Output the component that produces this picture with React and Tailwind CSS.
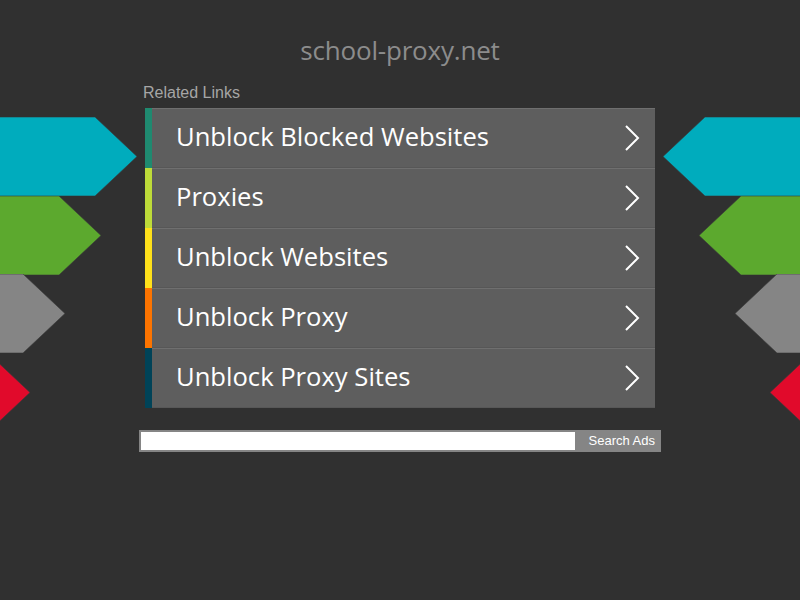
import React from 'react';

const links = [
  { label: 'Unblock Blocked Websites', bar: 'bg-[#1f8a70]' },
  { label: 'Proxies', bar: 'bg-[#bedb39]' },
  { label: 'Unblock Websites', bar: 'bg-[#ffe11a]' },
  { label: 'Unblock Proxy', bar: 'bg-[#fd7400]' },
  { label: 'Unblock Proxy Sites', bar: 'bg-[#004358]' },
];

// decorative arrow shapes on both edges of the page
const arrows = [
  { top: 117, rect: 95, fill: '#00acbd' },
  { top: 196, rect: 59, fill: '#5ca92e' },
  { top: 274, rect: 23, fill: '#858585' },
  { top: 353, rect: -12, fill: '#e10a2b' },
];

const Arrow = ({ rect, fill, flip }) => {
  const w = rect + 42;
  const pts = `-20,0 ${rect},0 ${w},39.5 ${rect},79 -20,79`;
  return (
    <svg width="160" height="79" viewBox="0 0 160 79" className={flip ? '-scale-x-100' : ''}>
      <polygon points={pts} fill={fill} stroke="#3a3a3a" strokeWidth="0.6" />
    </svg>
  );
};

const Chevron = () => (
  <svg width="16" height="28" viewBox="0 0 16 28" fill="none">
    <path d="M2 2 L14 14 L2 26" stroke="#fff" strokeWidth="2" />
  </svg>
);

export default function App() {
  return (
    <div className="relative min-h-[600px] w-full overflow-hidden bg-[#303030]">
      {arrows.map((a) => (
        <div key={a.top} className="absolute left-0" style={{ top: a.top }}>
          <Arrow rect={a.rect} fill={a.fill} />
        </div>
      ))}
      {arrows.map((a) => (
        <div key={'r' + a.top} className="absolute right-0" style={{ top: a.top }}>
          <Arrow rect={a.rect} fill={a.fill} flip />
        </div>
      ))}

      <div className="relative mx-auto w-[522px] pt-[32px]">
        <h1 className="text-center font-['Open_Sans',sans-serif] text-[26px] leading-[36px] tracking-[-0.2px] text-[#8c8c8c]">
          school-proxy.net
        </h1>
        <div className="mt-[15px] pl-[4px] font-['Liberation_Sans',Arial,sans-serif] text-[16px] leading-[20px] text-[#a6a6a6]">
          Related Links
        </div>
        <ul className="ml-[6px] mt-[5px] w-[510px]">
          {links.map((l) => (
            <li key={l.label} className="flex h-[60px] bg-[#5e5e5e]">
              <div className={`w-[7px] shrink-0 ${l.bar}`} />
              <a
                href="#"
                className="flex flex-1 items-center justify-between border-t border-t-[#6f6f6f] border-b border-b-[#575757] pl-[24px] pr-[15px]"
              >
                <span className="pb-[2px] font-['Open_Sans',sans-serif] text-[25.6px] leading-none text-white">{l.label}</span>
                <Chevron />
              </a>
            </li>
          ))}
        </ul>
        <form className="mt-[22px] flex h-[22px] w-[522px] bg-[#858585] p-[2px] pr-0">
          <input type="text" className="h-[18px] w-[434px] bg-white outline-none" />
          <button
            type="button"
            className="flex-1 pr-[6px] text-right font-['Liberation_Sans',Arial,sans-serif] text-[13px] leading-[18px] text-white"
          >
            Search Ads
          </button>
        </form>
      </div>
    </div>
  );
}
